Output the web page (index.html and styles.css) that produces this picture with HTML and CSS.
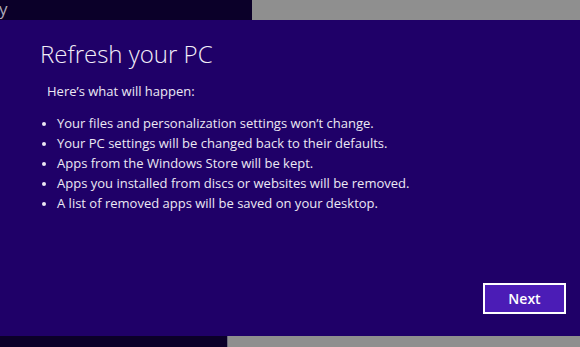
FILE: index.html
```html
<!DOCTYPE html>
<html lang="en">
<head>
  <meta charset="UTF-8" />
  <title>Refresh your PC</title>
  <link rel="stylesheet" href="styles.css">
</head>
<body>
  <!-- Top strip -->
  <div class="strip top">
    <div class="dark"><span class="cut">y</span></div>
    <div class="grey"></div>
  </div>

  <!-- Dialog -->
  <div class="panel">
    <h1>Refresh your PC</h1>
    <p class="intro">Here’s what will happen:</p>
    <ul class="list">
      <li>Your files and personalization settings won’t change.</li>
      <li>Your PC settings will be changed back to their defaults.</li>
      <li>Apps from the Windows Store will be kept.</li>
      <li>Apps you installed from discs or websites will be removed.</li>
      <li>A list of removed apps will be saved on your desktop.</li>
    </ul>
    <div class="actions">
      <button class="next">Next</button>
    </div>
  </div>

  <!-- Bottom strip -->
  <div class="strip bottom">
    <div class="dark"></div>
    <div class="grey"></div>
  </div>
</body>
</html>
```

FILE: styles.css
```css
body {
  margin: 0;
  width: 580px;
  height: 347px;
  overflow: hidden;
  font-family: 'Open Sans', 'Noto Sans', sans-serif;
  background: #1f0068;
  color: #ece8f4;
}
.strip {
  display: flex;
}
.strip .dark {
  background: #0b0029;
}
.strip .grey {
  flex: 1;
  background: #8f8f8f;
}
.top {
  height: 20px;
}
.top .dark {
  width: 252px;
}
.bottom {
  height: 11px;
}
.bottom .dark {
  width: 227px;
}
.bottom .grey {
  border-left: 1px solid #6a6a7a;
}
.cut {
  display: block;
  margin: -3px 0 0 -1px;
  font-size: 17px;
  color: #aeaab8;
}

.panel {
  height: 316px;
  display: flex;
  flex-direction: column;
  padding: 0 14px 0 40px;
  box-sizing: border-box;
}
.panel h1 {
  margin: 18px 0 0;
  font-size: 24px;
  font-weight: 300;
  line-height: 32px;
  color: #f2eef8;
}
.intro {
  margin: 11px 0 0 7px;
  font-size: 13px;
  line-height: 20px;
}
.list {
  margin: 12px 0 0;
  padding: 0;
  list-style: none;
}
.list li {
  position: relative;
  padding-left: 17px;
  font-size: 13px;
  line-height: 20px;
}
.list li::before {
  content: '';
  position: absolute;
  left: 2px;
  top: 9px;
  width: 4px;
  height: 4px;
  border-radius: 50%;
  background: #ece8f4;
}

.actions {
  margin-top: auto;
  margin-bottom: 22px;
  display: flex;
  justify-content: flex-end;
}
.next {
  width: 83px;
  height: 31px;
  background: #4b1cb6;
  border: 2px solid #ffffff;
  color: #ffffff;
  font-family: 'Open Sans', 'Noto Sans', sans-serif;
  font-size: 14px;
  font-weight: 600;
  cursor: pointer;
}
```
